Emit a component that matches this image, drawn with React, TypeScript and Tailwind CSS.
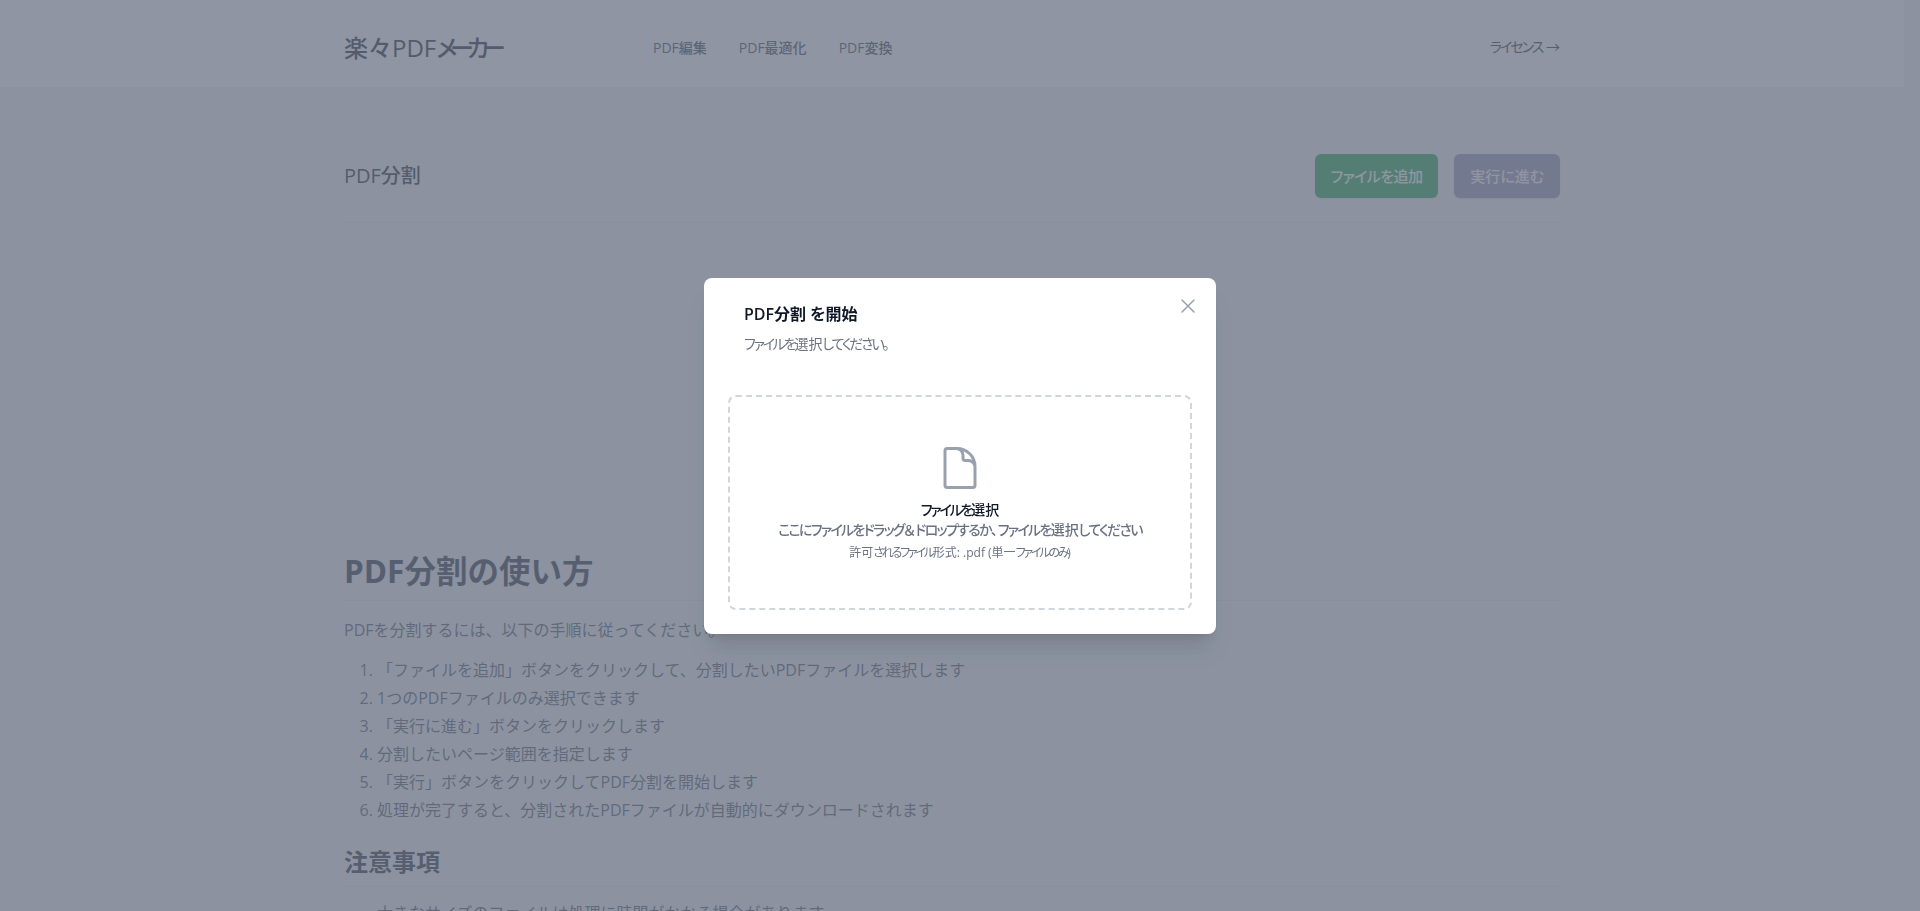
import type { ReactNode } from "react";

function K({ children }: { children: ReactNode }) {
  return <span className="tracking-[-1.7px]">{children}</span>;
}

function KS({ children }: { children: ReactNode }) {
  return <span className="tracking-[-2.2px]">{children}</span>;
}

export default function App() {
  const steps = [
    "「ファイルを追加」ボタンをクリックして、分割したいPDFファイルを選択します",
    "1つのPDFファイルのみ選択できます",
    "「実行に進む」ボタンをクリックします",
    "分割したいページ範囲を指定します",
    "「実行」ボタンをクリックしてPDF分割を開始します",
    "処理が完了すると、分割されたPDFファイルが自動的にダウンロードされます",
  ];
  return (
    <div className="h-[911px] overflow-hidden bg-[#f3f4f8] pr-4 font-['Open_Sans','Noto_Sans_CJK_JP',sans-serif] text-gray-900">
      <header className="h-[87px] bg-white">
        <div className="mx-auto flex max-w-7xl items-center px-8 pt-[30px]">
          <div className="w-[309px] text-2xl leading-9 font-medium text-gray-900">
            楽々PDF<span className="tracking-[-7px] [font-feature-settings:'palt']">メーカー</span>
          </div>
          <nav className="flex gap-8 text-sm font-medium text-gray-700">
            <span>PDF編集</span>
            <span>PDF最適化</span>
            <span>PDF変換</span>
          </nav>
          <div className="ml-auto -translate-y-px text-sm text-gray-800 [font-feature-settings:'palt']">
            <span className="tracking-[-2px]">ライセンス</span> →
          </div>
        </div>
      </header>
      <main className="mx-auto max-w-7xl px-8 pt-[67px]">
        <div className="flex items-center justify-between border-b border-gray-200 pb-6">
          <h1 className="text-xl font-medium text-gray-900">PDF分割</h1>
          <div className="flex gap-4">
            <button className="h-11 rounded-md bg-[#16a34a] px-4 text-[15px] font-medium tracking-[-0.6px] text-white shadow-sm [font-feature-settings:'palt']">ファイルを追加</button>
            <button className="h-11 rounded-md bg-[#9092b4] px-4 text-[15px] font-medium text-white shadow-sm [font-feature-settings:'palt']">実行に進む</button>
          </div>
        </div>
        <article className="pt-[328px] text-gray-600">
          <h2 className="border-b border-gray-200 pb-[9px] text-[31.5px] leading-10 font-bold text-gray-800">PDF分割の使い方</h2>
          <p className="mt-[15px] leading-7">PDFを分割するには、以下の手順に従ってください。</p>
          <ol className="mt-[12px] list-decimal pl-[33px] leading-7">
            {steps.map((s) => (
              <li key={s}>{s}</li>
            ))}
          </ol>
          <h3 className="mt-[22px] border-b border-gray-200 pb-2 text-2xl leading-8 font-bold text-gray-800">注意事項</h3>
          <ul className="mt-3 list-disc pl-[33px] leading-7">
            <li>大きなサイズのファイルは処理に時間がかかる場合があります</li>
          </ul>
        </article>
      </main>
      <div className="fixed inset-0 bg-[#6a7283]/75" />
      <div className="fixed inset-0 flex items-center justify-center">
        <div className="relative w-[512px] rounded-lg bg-white px-6 pt-[26px] pb-6 shadow-xl">
          <button className="absolute top-4 right-4 text-gray-400" aria-label="close">
            <svg className="h-6 w-6" fill="none" viewBox="0 0 24 24" strokeWidth={1.5} stroke="currentColor">
              <path strokeLinecap="round" strokeLinejoin="round" d="M6 18 18 6M6 6l12 12" />
            </svg>
          </button>
          <div className="px-4">
            <h3 className="text-base leading-5 font-semibold text-gray-900 [font-feature-settings:'palt']">PDF分割 を開始</h3>
            <p className="mt-[10px] text-sm leading-5 text-gray-500 [font-feature-settings:'palt']">
              <KS>ファイルを</KS>選択<KS>してください</KS>。
            </p>
          </div>
          <div className="mt-[41px] flex h-[215px] flex-col items-center rounded-lg border-2 border-dashed border-gray-300 pt-[47px] text-center [font-feature-settings:'palt']">
            <svg className="h-12 w-12 text-gray-400" fill="none" viewBox="0 0 24 24" strokeWidth={1.5} stroke="currentColor">
              <path strokeLinecap="round" strokeLinejoin="round" d="M19.5 14.25v-2.625a3.375 3.375 0 0 0-3.375-3.375h-1.5A1.125 1.125 0 0 1 13.5 7.125v-1.5a3.375 3.375 0 0 0-3.375-3.375H8.25m2.25 0H5.625c-.621 0-1.125.504-1.125 1.125v17.25c0 .621.504 1.125 1.125 1.125h12.75c.621 0 1.125-.504 1.125-1.125V11.25a9 9 0 0 0-9-9Z" />
            </svg>
            <div className="mt-2 text-sm leading-5 font-medium text-gray-900">
              <KS>ファイルを</KS>選択
            </div>
            <div className="text-sm leading-5 font-medium text-gray-500">
              <K>ここにファイルをドラッグ</K>＆<K>ドロップするか</K>、<K>ファイルを</K>選択<K>してください</K>
            </div>
            <div className="mt-[5px] text-xs leading-4 text-gray-500">
              許可<KS>されるファイル</KS>形式: .pdf (単一<KS>ファイルのみ</KS>)
            </div>
          </div>
        </div>
      </div>
    </div>
  );
}
